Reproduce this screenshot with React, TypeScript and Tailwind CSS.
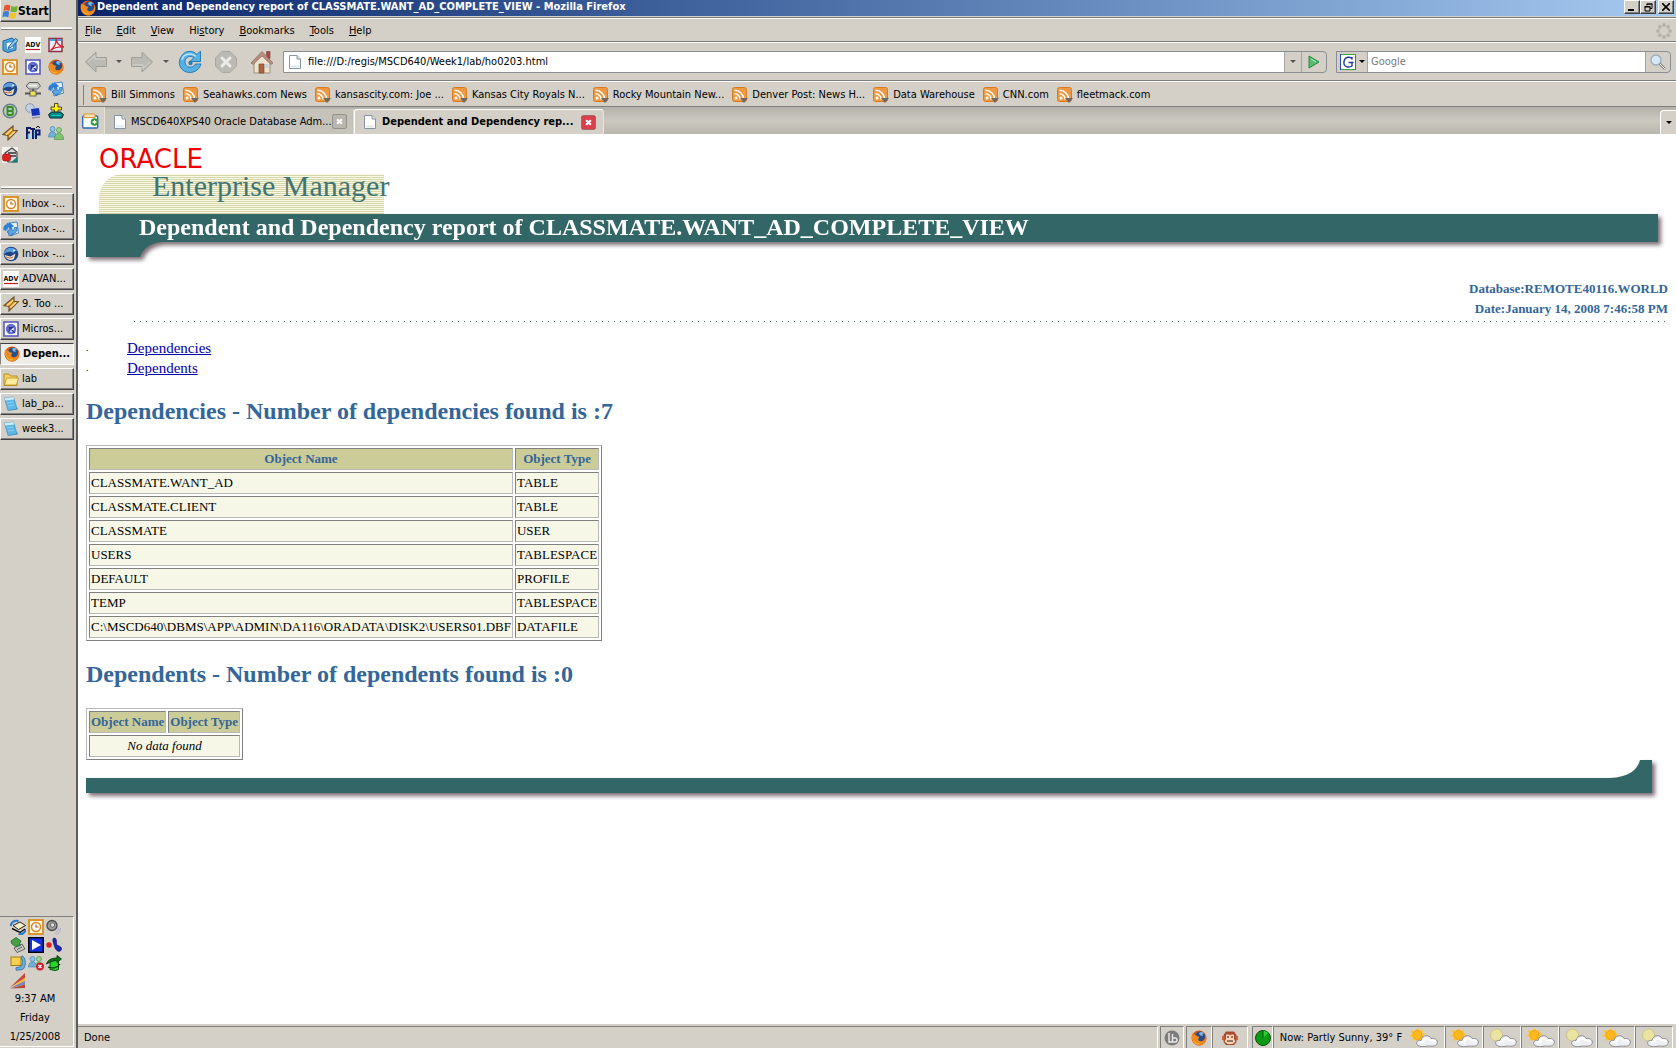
import React from "react";

type IconProps = { className?: string };
type SvgProps = { className?: string; box?: string; children: React.ReactNode };

function Svg({ className = "size-4", box = "0 0 16 16", children }: SvgProps) {
  return (
    <svg viewBox={box} className={`shrink-0 ${className}`} fill="none" aria-hidden="true">
      {children}
    </svg>
  );
}

/* ---------- launcher and tray icons ---------- */

const WindowsFlag = () => (
  <Svg>
    <path d="M2.500 2.500c2-1 4-1 6 0L7.500 8c-2-1-4-1-6 0z" fill="#e4572e" />
    <path d="M9.300 3c2 1 4 1 6.500 0L14.800 8.500c-2 1-4 1-6.500 0z" fill="#6fb43a" />
    <path d="M1.300 8.800c2-1 4-1 6 0l-1 5.500c-2-1-4-1-6 0z" fill="#3f7fd6" />
    <path d="M8 9.500c2 1 4 1 6.500 0l-1 5.500c-2 1-4 1-6.500 0z" fill="#f4c22b" />
  </Svg>
);
const ClockIcon = ({ className }: IconProps) => (
  <Svg className={className}>
    <rect x="1" y="1" width="14" height="14" fill="#fff4dc" stroke="#d9952f" strokeWidth="2" />
    <circle cx="8" cy="8" r="4.500" fill="#fff" stroke="#d68a25" strokeWidth="1.500" />
    <path d="M8 5.500V8h2.500" stroke="#a8630f" strokeWidth="1.200" />
  </Svg>
);
const ComposeIcon = () => (
  <Svg>
    <path d="M1 4l9-3 4 3v9l-8 2.500-5-2z" fill="#4da6dc" stroke="#1565a8" />
    <path d="M4 5.500l7-1 .5 7-7 1.500z" fill="#f4fbff" stroke="#1f78bd" strokeWidth=".8" />
    <path d="M6.500 10l7-8.500L16 3.500 9 10.500l-3 1z" fill="#8fd0f2" stroke="#135089" strokeWidth=".9" />
  </Svg>
);
const AdvIcon = () => (
  <Svg>
    <rect width="16" height="16" fill="#fff" />
    <text x="8" y="10" textAnchor="middle" fontSize="7" fontWeight="bold" fontFamily="DejaVu Sans Condensed, sans-serif" fill="#111">
      ADV
    </text>
    <path d="M1 12.500h14" stroke="#c01818" strokeWidth="1.200" />
  </Svg>
);
const AcrobatIcon = () => (
  <Svg>
    <rect x="1" y="1.500" width="13" height="13" fill="#e4effa" stroke="#8e3346" strokeWidth="1.500" />
    <path d="M2 3h11.500" stroke="#48a3dc" strokeWidth="2" />
    <path d="M2.500 13.500C6 10.500 8.500 6 8 2c1 5 4 7.500 8 8-5-.5-10 .5-13.500 3.500z" stroke="#d3202a" strokeWidth="1.300" fill="#fff" />
  </Svg>
);
const QueryIcon = () => (
  <Svg>
    <rect x="1" y="1" width="14" height="14" fill="#fff" stroke="#5a5cb8" strokeWidth="1.600" />
    <circle cx="8" cy="8" r="4" stroke="#5f6fcf" strokeWidth="2.400" />
    <path d="M7 7l5 5M6 6h4l-4 4z" stroke="#26309a" strokeWidth="1.200" fill="#26309a" />
  </Svg>
);
const FirefoxIcon = ({ className }: IconProps) => (
  <Svg className={className}>
    <circle cx="8" cy="8" r="7.500" fill="#d8590f" />
    <circle cx="9" cy="6.500" r="5" fill="#274f8c" />
    <path d="M8 3c2-1.500 4-1 5 .5-2 0-2 1.500-1 2.500-2 0-4-1-4-3z" fill="#7fb7e0" />
    <path d="M1 3.500c1 1 2 1 3 1l2.500 2c2 0 2 1 1 2-1 2 1 3 3 3 3 0 4.500-3 4-7C17 10 13 15.800 8 15.500 3 15 0 11 1 3.500z" fill="#ef8a1d" />
    <path d="M1.500 8c1 4 4 6 8 5.500-2 1.500-7 1-8-5.500z" fill="#f9c43a" />
  </Svg>
);
const ThunderbirdIcon = () => (
  <Svg>
    <circle cx="8" cy="8" r="7.300" fill="#1f4584" />
    <path d="M1 8c0-4 5-8 10-5.500L15 5c-2-.5-4 .5-4.500 2-3-2-6-1.500-9.500 1z" fill="#5b9ddf" />
    <path d="M1.500 9l6 1.500 5-3-1.500 5.500c-3 2-8 1-9.500-4z" fill="#f0dcc4" />
    <path d="M2 11l5 1 3-1" stroke="#b9744e" />
    <circle cx="11" cy="4.500" r=".9" fill="#fff" />
  </Svg>
);
const NetworkIcon = () => (
  <Svg>
    <path d="M1 5l3-3.500h9L15.500 5l-3 3H4z" fill="#c7c7c4" stroke="#555" strokeWidth=".9" />
    <path d="M4 4.500h8" stroke="#f5f5f2" strokeWidth="1.500" />
    <path d="M8 8v4M0 12.500h16" stroke="#555" strokeWidth="1.800" />
    <rect x="5" y="10" width="6" height="5" fill="#efe05c" stroke="#555" strokeWidth=".9" />
  </Svg>
);
const SyncMailIcon = () => (
  <Svg>
    <path d="M4 2.500l10-1.500 1.500 11L6 15z" fill="#e7f2fc" stroke="#3f83c6" />
    <path d="M.5 9C0 5 2 3 6 3V1l5 4-5 4V6.500C4 6.500 3.500 7.500 3.500 10z" fill="#2b7fd6" />
    <path d="M14 6.500c.5 4-2 6.500-5 6.500v2l-5-4 5-4v2.500c2 0 2.500-1 2.500-3z" fill="#5aa7e8" stroke="#1b57a3" strokeWidth=".6" />
  </Svg>
);
const ButtonBIcon = () => (
  <Svg>
    <circle cx="8" cy="8" r="6.800" fill="#b4cfb2" stroke="#6a7f8f" strokeWidth="1.500" />
    <path d="M5.500 12V4h3.500a2 2 0 010 4H6m3 0a2 2 0 010 4H5.500" stroke="#3a8a2c" strokeWidth="1.800" />
  </Svg>
);
const MonitorsIcon = () => (
  <Svg>
    <circle cx="5" cy="5" r="4.300" fill="#c3cfe2" stroke="#8798b4" />
    <path d="M5.500 5.500l9-1 1 8-9 1z" fill="#1830b4" stroke="#c9d2ea" />
    <path d="M7 15l8-1" stroke="#8f94a4" strokeWidth="1.500" />
  </Svg>
);
const PlusDriveIcon = () => (
  <Svg>
    <path d="M6.500.5h3.500v3.500H13.500v3H10V10H6.500V7H3V4h3.500z" fill="#ffef00" stroke="#222" strokeWidth=".8" />
    <path d="M.5 11.500l3-2.500h9l3 2.500-1.500 3.500h-12z" fill="#058585" stroke="#012f2f" />
    <path d="M3.500 12.500h9" stroke="#02d0b9" />
  </Svg>
);
const WinampIcon = () => (
  <Svg>
    <path d="M1 9.500L11 1v4.500h4.500L6 15v-4.500z" fill="#f29b1f" stroke="#6f5530" strokeWidth="1.200" />
    <path d="M4 9.500l6-5M7.500 11.500l5.500-5" stroke="#ffe296" strokeWidth="1.300" />
    <path d="M6.500 10.500l4-5" stroke="#6f5530" strokeWidth=".8" />
  </Svg>
);
const FtpIcon = () => (
  <Svg>
    <path d="M2 14V3h4M2 7.500h3M5.500 4H10M8 4v10M11 14V5.500h3.500v4H11" stroke="#0b1b6a" strokeWidth="2" />
    <path d="M3.200 14V9M9.200 13V5.500" stroke="#39b5e8" strokeWidth=".8" />
    <path d="M11 3l2-2 2 2" stroke="#111" />
  </Svg>
);
const PeopleIcon = () => (
  <Svg>
    <circle cx="4.500" cy="4" r="2.500" fill="#8cc6e8" stroke="#4a86ad" strokeWidth=".7" />
    <path d="M.5 12c0-7 8-7 8 0z" fill="#6fb1dc" stroke="#4a86ad" strokeWidth=".7" />
    <circle cx="11" cy="5" r="2.500" fill="#9bd48f" stroke="#4e9349" strokeWidth=".7" />
    <path d="M6.500 14.500c0-8.500 9-8.500 9 0z" fill="#7cc470" stroke="#4e9349" strokeWidth=".7" />
  </Svg>
);
const ServerReportIcon = () => (
  <Svg>
    <rect width="16" height="16" fill="#f4f2ee" />
    <path d="M3 6l7-5 5 4v10H6z" fill="#dcdcdc" stroke="#444" strokeWidth="1.200" />
    <path d="M6 6h8M6 9h8" stroke="#333" strokeWidth="1.400" />
    <rect x=".5" y="7" width="8" height="7" rx="2" fill="#df2020" stroke="#8d0e0e" strokeWidth=".6" />
    <path d="M9 15.500l6.500-6v6z" fill="#1e7c78" />
  </Svg>
);
const FolderIcon = () => (
  <Svg>
    <path d="M1 3h5l1.500 2H14v9.500H1z" fill="#f4d465" stroke="#b98d1f" />
    <path d="M1.500 14l2-7h12l-2 7z" fill="#ffeb9c" stroke="#b98d1f" strokeWidth=".8" />
  </Svg>
);
const NotepadIcon = () => (
  <Svg>
    <path d="M6 14.500l9-1.500-2-2-5 1z" fill="#3a5a72" />
    <path d="M1.500 2l9-1 3.500 12-9 1.500z" fill="#5db8e6" stroke="#3d8fc0" strokeWidth=".7" />
    <path d="M1.500 2l9-1 .7 2.500-9 1z" fill="#c9ecfb" />
    <path d="M4 7l6-1M5 10l6-1" stroke="#8fd2f2" />
  </Svg>
);
const TraySync = () => (
  <Svg>
    <path d="M3 6.500l7-3.500 5.500 3.500-7 4z" fill="#f4efc8" stroke="#222" />
    <path d="M1 7c-.5-4 4-6 7.500-5M15.500 10c0 4-4 6-7 5" stroke="#2676d4" strokeWidth="2" />
    <path d="M2 9.500l8 4 5-3.500" stroke="#111" strokeWidth="1.500" />
  </Svg>
);
const SpeakerIcon = () => (
  <Svg>
    <circle cx="6" cy="6.500" r="5" fill="#9c9c9c" stroke="#4b4b4b" strokeWidth="1.300" />
    <circle cx="6.500" cy="6" r="2.200" fill="#dcdcdc" stroke="#555" strokeWidth=".8" />
    <path d="M12 8.500c1 3-1 5-3 5.500M14.500 9c0 4-2 5.500-4 6.500" stroke="#a9acd0" />
  </Svg>
);
const EjectIcon = () => (
  <Svg>
    <path d="M4 11l8-4 3 5-8 3.500z" fill="#c9c9c4" stroke="#555" strokeWidth=".9" />
    <path d="M7 12.500l5-2.500" stroke="#555" />
    <path d="M1 4l5-3.500 5 3.500-1.500 3 1 1.500-5 1-4-3z" fill="#46a046" stroke="#1f5a22" strokeWidth=".7" />
  </Svg>
);
const PlayTile = () => (
  <Svg>
    <rect x=".7" y=".7" width="14.600" height="14.600" fill="#1231e0" stroke="#000" strokeWidth="1.400" />
    <path d="M4 3l9 5-9 5z" fill="#fff" />
  </Svg>
);
const JointIcon = () => (
  <Svg>
    <circle cx="3" cy="8" r="2.700" fill="#e11c1c" />
    <path d="M8 1c3 0 2.500 4 2.500 6s6 2 5 5.500c-2 4-6 1-7-3S5.500 2 8 1z" fill="#1b2bb2" stroke="#0c1160" strokeWidth=".6" />
  </Svg>
);
const DisplayIcon = () => (
  <Svg>
    <rect x="1" y="2" width="10" height="8.500" fill="#f5cf52" stroke="#a77d12" />
    <path d="M12 .7c4.500 2 4.500 12 0 14l-6 .5v-2.500l4-.7c3-2 3-7 1-9z" fill="#6aaee2" stroke="#2a69a5" strokeWidth=".8" />
  </Svg>
);
const PeopleOffline = () => (
  <Svg>
    <circle cx="4.500" cy="4" r="2.500" fill="#8cc6e8" stroke="#4a86ad" strokeWidth=".7" />
    <path d="M.5 12c0-7 8-7 8 0z" fill="#6fb1dc" stroke="#4a86ad" strokeWidth=".7" />
    <circle cx="11" cy="4" r="2.500" fill="#9bd48f" stroke="#4e9349" strokeWidth=".7" />
    <path d="M7 12c0-7 8-7 8 0z" fill="#7cc470" />
    <circle cx="12" cy="11.500" r="4" fill="#c8232b" />
    <path d="M10.500 10l3 3m0-3l-3 3" stroke="#fff" strokeWidth="1.300" />
  </Svg>
);
const GreenArrowIcon = () => (
  <Svg>
    <path d="M4 5h8.500v9.500l-3 1-5.500-1z" fill="#28d428" stroke="#064d06" />
    <path d="M.5 9C2 4 7 3 11 3V.5L15.500 4 11 7.500V5.500C7 5.500 4 7 .5 9z" fill="#0a7316" stroke="#012d05" strokeWidth=".8" />
    <path d="M2 12c5 2 9 1 12-3" stroke="#012d05" strokeWidth="1.200" />
  </Svg>
);
const FanIcon = () => (
  <Svg>
    <path d="M0 14.500L15 0v5z" fill="#d0432c" />
    <path d="M0 14.500L15 5v3z" fill="#e6b94a" />
    <path d="M0 15L15 8v3.500z" fill="#7b83b8" />
    <path d="M0 15.500L15 11.500V15z" fill="#b4483e" />
  </Svg>
);

/* ---------- browser icons ---------- */

const PageIcon = () => (
  <Svg className="h-4 w-3" box="0 0 12 16">
    <path d="M.5 1.500H8L11.500 5v9.500H.5z" fill="#fff" stroke="#8494a4" />
    <path d="M8 1.500V5h3.500" fill="#dbe6ef" stroke="#8494a4" />
    <path d="M2 12.500h8" stroke="#e1e9f0" strokeWidth="2" />
  </Svg>
);
const BackArrow = ({ className }: IconProps) => (
  <Svg className={`h-6 w-6 ${className ?? ""}`} box="0 0 24 24">
    <path d="M1.500 12L12 2v5.500h10.500v9H12V22z" fill="#bcbab4" stroke="#a09e97" />
    <path d="M4 12l7-6.500V9h10" stroke="#d6d4ce" />
  </Svg>
);
const Caret = ({ className = "text-[#555]" }: IconProps) => (
  <Svg className={`h-[3px] w-[6px] ${className}`} box="0 0 6 3">
    <path d="M0 0h6L3 3z" fill="currentColor" />
  </Svg>
);
const ReloadIcon = () => (
  <Svg className="size-6" box="0 0 24 24">
    <path d="M19 4.500L22.500 1v10.500H12l4-4C12 5 7 7 7 12c0 6 8 7 10.500 2H23C21 21 14 23.800 8.500 22 1.500 20-.5 12 3 7 6 .5 14-.5 19 4.500z" fill="#55b0e4" stroke="#2a7db8" />
    <path d="M4 10c1-6 9-8 14-3.500" stroke="#c0e6f9" strokeWidth="1.500" />
    <circle cx="12.500" cy="13" r="2.200" fill="#2a7db8" />
  </Svg>
);
const StopIcon = () => (
  <Svg className="size-6" box="0 0 24 24">
    <path d="M8 1.500h8L22.500 8v8L16 22.500H8L1.500 16V8z" fill="#bcbab5" stroke="#a9a7a2" />
    <path d="M8 8l8 8m0-8l-8 8" stroke="#ecebe8" strokeWidth="3" strokeLinecap="round" />
  </Svg>
);
const HomeIcon = () => (
  <Svg className="size-6" box="0 0 24 24">
    <path d="M16.500 1.500h3.500v7h-3.500z" fill="#a9453b" stroke="#7c554c" strokeWidth=".7" />
    <path d="M4 11l8-8 8 8v12H4z" fill="#efe2cf" stroke="#a18c79" />
    <path d="M1 13L12 1.500 23 13l-2 1.500L12 6l-9 8.500z" fill="#b98a80" stroke="#8a6a63" strokeWidth=".7" />
    <path d="M9 23v-9h5v9z" fill="#b1623f" stroke="#7b4a35" strokeWidth=".7" />
    <path d="M15.500 14h3v4h-3z" fill="#bcd3df" />
  </Svg>
);
const FeedIcon = () => (
  <Svg>
    <rect x=".5" y=".5" width="14" height="14" rx="2" fill="#ee9a44" stroke="#d97b1c" />
    <circle cx="4" cy="11" r="1.500" fill="#fff" />
    <path d="M2.500 6.800a5.700 5.700 0 015.700 5.700M2.500 3.300a9.200 9.200 0 019.200 9.200" stroke="#fff" strokeWidth="1.500" />
    <path d="M8 11h8l-4 5z" fill="#6f6a64" />
  </Svg>
);
const NewTabIcon = () => (
  <Svg className="h-4 w-[17px]" box="0 0 17 16">
    <rect x=".7" y="3" width="15" height="12" rx="1" fill="#fbfdff" stroke="#2f62b8" strokeWidth="1.300" />
    <path d="M2 1h11v3.500H2z" fill="#f5e2b4" stroke="#d79a3d" />
    <circle cx="12.500" cy="9" r="3.800" fill="#2f9b35" />
    <path d="M12.500 7v4M10.500 9h4" stroke="#fff" strokeWidth="1.300" />
  </Svg>
);
const CloseTab = ({ className }: IconProps) => (
  <Svg className={`size-[15px] ${className ?? ""}`}>
    <rect x=".5" y=".5" width="15" height="15" rx="2" fill="currentColor" stroke="#00000040" />
    <path d="M5.500 5.500l5 5m0-5l-5 5" stroke="#fff" strokeWidth="2.200" />
  </Svg>
);
const GoIcon = () => (
  <Svg className="h-[14px] w-3" box="0 0 12 14">
    <path d="M1 1l10 6-10 6z" fill="#58bb6f" stroke="#248a42" />
    <path d="M3 4l5 3" stroke="#b7e6c2" />
  </Svg>
);
const GoogleIcon = () => (
  <Svg>
    <rect x=".5" y=".5" width="15" height="15" fill="#fff" stroke="#3aa13f" />
    <path d="M.5 0v16" stroke="#2449b8" />
    <path d="M15.500 2v14" stroke="#d6302a" />
    <path d="M12 5.500V3M12 5c-1-2.500-7-3-8 2.500S9 14 12 12V8.500H8.500M12 8.500h1.500" stroke="#1c3a9e" strokeWidth="1.400" />
  </Svg>
);
const SearchIcon = () => (
  <Svg>
    <path d="M9.500 9.500L15 15" stroke="#888" strokeWidth="2.500" />
    <path d="M9.500 9.500L15 15" stroke="#e9e9e9" />
    <circle cx="6" cy="6" r="5" fill="#d6e9f5" stroke="#9aaebb" strokeWidth="1.300" />
  </Svg>
);
const throbberDots: [number, number][] = [
  [8, 2],
  [12.2, 3.8],
  [14, 8],
  [12.2, 12.2],
  [8, 14],
  [3.8, 12.2],
  [2, 8],
  [3.8, 3.8],
];
const Throbber = () => (
  <Svg>
    {throbberDots.map(([x, y]) => (
      <circle key={`${x}-${y}`} cx={x} cy={y} r="1.900" fill="#b5b2aa" />
    ))}
  </Svg>
);
const BadgeB = () => (
  <Svg>
    <circle cx="8" cy="8" r="7.500" fill="#7c7c7c" />
    <path d="M5 3v9h3M8.500 4v8h2.500a2 2 0 000-4H8.500" stroke="#e6e6e6" strokeWidth="1.500" />
  </Svg>
);
const MonkeyIcon = () => (
  <Svg>
    <path d="M4 1.500h8L14.500 5v7L12 15H4l-2.500-3V5z" fill="#a8482c" />
    <path d="M0 6h2.500v4H0zM13.500 6H16v4h-2.500z" fill="#c9623f" />
    <path d="M4 4.500h3l1 1 1-1h3v4.500l1.500 2.500-3 2.500h-5l-3-2.500L4 9z" fill="#fbd5b5" />
    <path d="M6 6v2M10 6v2M5 11h6" stroke="#3c150a" />
  </Svg>
);
const RadarIcon = () => (
  <Svg>
    <circle cx="8" cy="8" r="7.500" fill="#0c9a16" stroke="#064f0b" />
    <path d="M8 8V.8A7 7 0 0113 3z" fill="#29d238" />
    <path d="M8 8V1" stroke="#064f0b" />
  </Svg>
);
function Weather({ night = false }: { night?: boolean }) {
  return (
    <Svg className="h-[19px] w-[29px]" box="0 0 29 19">
      {!night && (
        <path
          d="M9 0l1.500 3L14 1.500l-.5 3.500L17 6l-3 2 2 3.500-3.500-.5L9 15l-2-3.500-4 1.500 1-4L0 8l3-2.500L1.500 2l4 1z"
          fill="#f7c53a"
        />
      )}
      <circle cx="8.500" cy="7" r={night ? 6 : 4.5} fill={night ? "#ebe3a0" : "#fdb81e"} stroke={night ? "#cbc58a" : "#f2a51c"} />
      <path d="M9 17.500c-3-2-1-6 3-5 1-6 9-6 10-2 5-1 8 3 5.500 6-2 2.500-7 1.500-9 1.500-3 1-7.500 1-9.500-.5z" fill="#eeeff3" stroke="#84868e" strokeWidth=".9" />
      <path d="M10.500 14.500c2-1 3-1 4-.5 0-4 5-5 7-1.500 2-.5 4 0 5 1.500" stroke="#fff" strokeWidth="1.800" />
    </Svg>
  );
}

/* ---------- desktop sidebar ---------- */

const raised = "border border-t-white border-l-white border-r-[#404040] border-b-[#404040] shadow-[inset_-1px_-1px_0_#808080]";

const launchers: [string, React.ReactNode][] = [
  ["Compose", <ComposeIcon />],
  ["ADV", <AdvIcon />],
  ["Acrobat", <AcrobatIcon />],
  ["Outlook", <ClockIcon />],
  ["Query", <QueryIcon />],
  ["Firefox", <FirefoxIcon />],
  ["Thunderbird", <ThunderbirdIcon />],
  ["Network", <NetworkIcon />],
  ["Sync mail", <SyncMailIcon />],
  ["Notes", <ButtonBIcon />],
  ["Remote desktop", <MonitorsIcon />],
  ["Drive", <PlusDriveIcon />],
  ["Winamp", <WinampIcon />],
  ["FTP", <FtpIcon />],
  ["Messenger", <PeopleIcon />],
  ["Server", <ServerReportIcon />],
];

const tasks: [string, React.ReactNode][] = [
  ["Inbox -...", <ClockIcon />],
  ["Inbox -...", <SyncMailIcon />],
  ["Inbox -...", <ThunderbirdIcon />],
  ["ADVAN...", <AdvIcon />],
  ["9. Too ...", <WinampIcon />],
  ["Micros...", <QueryIcon />],
  ["Depen...", <FirefoxIcon />],
  ["lab", <FolderIcon />],
  ["lab_pa...", <NotepadIcon />],
  ["week3...", <NotepadIcon />],
];

function Divider() {
  return <div className="ml-px mr-1 h-[3px] border-b border-t border-b-[#808080] border-t-[#f4f3ef] bg-white" />;
}

function Sidebar() {
  return (
    <aside className="flex w-[78px] shrink-0 flex-col border-r-2 border-[#5c5c5c] bg-[#d4d0c8]">
      <button className={`flex h-[22px] w-[51px] items-center border-t-0 pl-px text-[12px] font-bold ${raised}`}>
        <WindowsFlag />
        Start
      </button>
      <div className="mt-[5px]">
        <Divider />
      </div>
      <nav className="mt-[7px] grid grid-cols-[repeat(3,16px)] gap-x-[7px] gap-y-[6px] pl-[2px]" aria-label="Quick launch">
        {launchers.map(([name, icon]) => (
          <button key={name} aria-label={name} className="size-4">
            {icon}
          </button>
        ))}
      </nav>
      <div className="mt-[23px]">
        <Divider />
      </div>
      <nav className="mt-1 flex flex-col gap-[3px] pr-[2px]" aria-label="Tasks">
        {tasks.map(([name, icon], i) => (
          <button
            key={i}
            className={
              name === "Depen..."
                ? "flex h-[22px] items-center gap-[3px] whitespace-nowrap border border-b-white border-l-[#808080] border-r-white border-t-[#404040] bg-[#efedea] pl-[3px] font-bold"
                : `flex h-[22px] items-center gap-[3px] whitespace-nowrap pl-[2px] ${raised}`
            }
          >
            {icon}
            {name}
          </button>
        ))}
      </nav>
      <div className="mb-px mr-[2px] mt-auto border border-l-0 border-b-white border-r-white border-t-[#808080] pt-[2px]">
        <div className="grid grid-cols-[repeat(3,16px)] gap-[2px] pl-[10px]">
          <TraySync />
          <ClockIcon />
          <SpeakerIcon />
          <EjectIcon />
          <PlayTile />
          <JointIcon />
          <DisplayIcon />
          <PeopleOffline />
          <GreenArrowIcon />
          <FanIcon />
        </div>
        <div className="pr-[3px] text-center leading-[19px]">
          <p>9:37 AM</p>
          <p>Friday</p>
          <p>1/25/2008</p>
        </div>
      </div>
    </aside>
  );
}

/* ---------- browser window ---------- */

const capButton = `flex h-[14px] w-4 items-center justify-center bg-[#d4d0c8] ${raised}`;

function TitleBar() {
  return (
    <header className="flex h-4 items-center bg-linear-to-r from-[#0a246a] to-[#a6caf0] pr-[2px] text-white">
      <FirefoxIcon className="ml-[2px] size-4" />
      <h1 className="ml-px flex-1 pb-[2px] text-[11px] font-bold">
        Dependent and Dependency report of CLASSMATE.WANT_AD_COMPLETE_VIEW - Mozilla Firefox
      </h1>
      <div className="flex self-start text-black">
        <button aria-label="Minimize" className={capButton}>
          <Svg className="h-2 w-2" box="0 0 8 8">
            <path d="M0 7h6" stroke="#000" strokeWidth="2" />
          </Svg>
        </button>
        <button aria-label="Restore" className={capButton}>
          <Svg className="h-[9px] w-[9px]" box="0 0 9 9">
            <path d="M3 2.500V1h5v4.500H6M1 3.500h5V8H1z" stroke="#000" />
            <path d="M2.500 1h6M.5 4h6" stroke="#000" />
          </Svg>
        </button>
        <button aria-label="Close" className={`ml-[2px] ${capButton}`}>
          <Svg className="h-2 w-2" box="0 0 8 8">
            <path d="M0 0l8 8m0-8L0 8" stroke="#000" strokeWidth="1.600" />
          </Svg>
        </button>
      </div>
    </header>
  );
}

const menus: [string, string, string][] = [
  ["", "F", "ile"],
  ["", "E", "dit"],
  ["", "V", "iew"],
  ["Hi", "s", "tory"],
  ["", "B", "ookmarks"],
  ["", "T", "ools"],
  ["", "H", "elp"],
];

function MenuBar() {
  return (
    <div className="mt-px flex h-[25px] items-center border-b border-t border-[#808080] pl-[7px] pr-[4px] pt-[2px] shadow-[inset_0_1px_0_#fff]">
      <nav className="flex flex-1 gap-[15px]">
        {menus.map(([a, k, b]) => (
          <button key={k + b}>
            {a}
            <u>{k}</u>
            {b}
          </button>
        ))}
      </nav>
      <Throbber />
    </div>
  );
}

function NavBar() {
  return (
    <div className="flex h-[39px] items-center border-b border-t border-b-[#808080] border-t-white pl-[6px] pr-[5px]">
      <button aria-label="Back">
        <BackArrow />
      </button>
      <button aria-label="Back history" className="ml-[8px]">
        <Caret />
      </button>
      <button aria-label="Forward" className="ml-[8px]">
        <BackArrow className="rotate-180" />
      </button>
      <button aria-label="Forward history" className="ml-[9px]">
        <Caret />
      </button>
      <button aria-label="Reload" className="ml-[9px]">
        <ReloadIcon />
      </button>
      <button aria-label="Stop" className="ml-[12px]">
        <StopIcon />
      </button>
      <button aria-label="Home" className="ml-[12px]">
        <HomeIcon />
      </button>
      <div className="ml-[9px] flex h-[22px] flex-1 items-stretch overflow-hidden rounded-r-[4px] border border-[#8a8f94]">
        <label className="flex flex-1 items-center gap-[7px] bg-white pl-[5px]">
          <PageIcon />
          <input
            aria-label="Address"
            className="w-full flex-1 bg-transparent outline-none"
            defaultValue="file:///D:/regis/MSCD640/Week1/lab/ho0203.html"
          />
        </label>
        <button aria-label="Show history" className="flex w-[17px] items-center justify-center border-l border-[#a5a5a0]">
          <Caret />
        </button>
        <button aria-label="Go" className="flex w-[25px] items-center justify-center border-l border-[#a5a5a0]">
          <GoIcon />
        </button>
      </div>
      <div className="ml-[9px] flex h-[22px] w-[335px] items-stretch overflow-hidden rounded-r-[4px] border border-[#8a8f94]">
        <button aria-label="Search engine" className="flex w-[30px] items-center justify-center gap-[3px]">
          <GoogleIcon />
          <Caret className="text-black" />
        </button>
        <input
          aria-label="Search"
          placeholder="Google"
          className="min-w-0 flex-1 border-l border-r border-[#a5a5a0] bg-white pl-[3px] outline-none placeholder:text-[#7a7a7a]"
        />
        <button aria-label="Search" className="flex w-6 items-center justify-center">
          <SearchIcon />
        </button>
      </div>
    </div>
  );
}

const bookmarks = [
  "Bill Simmons",
  "Seahawks.com News",
  "kansascity.com: Joe ...",
  "Kansas City Royals N...",
  "Rocky Mountain New...",
  "Denver Post: News H...",
  "Data Warehouse",
  "CNN.com",
  "fleetmack.com",
];

function BookmarksBar() {
  return (
    <div className="flex h-[26px] items-center border-b border-t border-b-[#808080] border-t-white pl-[5px] pt-[2px]">
      <div className="mr-[7px] h-5 w-px bg-[#808080]" />
      <nav className="flex gap-[8px]" aria-label="Bookmarks">
        {bookmarks.map((b) => (
          <button key={b} className="flex items-center gap-1 whitespace-nowrap">
            <FeedIcon />
            {b}
          </button>
        ))}
      </nav>
    </div>
  );
}

function TabBar() {
  return (
    <div className="flex h-[27px] items-end bg-linear-to-b from-[#b4b1aa] via-[#cbc8c0] to-[#b9b6ae]">
      <button aria-label="New tab" className="flex h-full w-[27px] items-center border-r border-[#e6e3dc] bg-[#d4d0c8] pl-[4px]">
        <NewTabIcon />
      </button>
      <div className="flex h-[25px] w-[249px] items-center border-r border-[#dedbd4] bg-[#c6c3bb] pl-[9px] pr-[6px]">
        <PageIcon />
        <button className="ml-[5px] flex-1 whitespace-nowrap text-left">MSCD640XPS40 Oracle Database Adm...</button>
        <button aria-label="Close tab">
          <CloseTab className="text-[#b9b6af]" />
        </button>
      </div>
      <div className="flex h-[25px] w-[250px] items-center rounded-t-[3px] border border-b-0 border-white border-r-[#e6e3dc] bg-[#d4d0c8] pl-[9px] pr-[7px]">
        <PageIcon />
        <button className="ml-[6px] flex-1 whitespace-nowrap text-left font-bold">Dependent and Dependency rep...</button>
        <button aria-label="Close tab">
          <CloseTab className="text-[#d9404c]" />
        </button>
      </div>
      <button aria-label="List all tabs" className="ml-auto flex h-6 w-4 items-center justify-center rounded-tl border-l border-t border-white bg-[#d4d0c8]">
        <Caret className="text-black" />
      </button>
    </div>
  );
}

/* ---------- report ---------- */

const cell = "h-[22px] border border-b-[#b8b8b8] border-l-[#808080] border-r-[#b8b8b8] border-t-[#808080] px-px leading-[20px]";
const headCell = `${cell} bg-[#cccc99] font-bold text-[#336699]`;
const bodyCell = `${cell} bg-[#f7f7e7]`;
const tableFrame =
  "border-separate border-spacing-[2px] whitespace-nowrap border border-b-[#808080] border-l-[#b8b8b8] border-r-[#808080] border-t-[#b8b8b8] text-[13px]";

const dependencies: [string, string][] = [
  ["CLASSMATE.WANT_AD", "TABLE"],
  ["CLASSMATE.CLIENT", "TABLE"],
  ["CLASSMATE", "USER"],
  ["USERS", "TABLESPACE"],
  ["DEFAULT", "PROFILE"],
  ["TEMP", "TABLESPACE"],
  ["C:\\MSCD640\\DBMS\\APP\\ADMIN\\DA116\\ORADATA\\DISK2\\USERS01.DBF", "DATAFILE"],
];

function Report() {
  return (
    <main className="flex-1 bg-white px-2 font-['Liberation_Serif',serif] text-black">
      <div className="flex h-20 flex-col pl-[13px] pt-[16px]">
        <div className="h-6 font-['DejaVu_Sans',sans-serif] text-[26px] leading-[18px] text-[#f00000]">ORACLE</div>
        <div className="h-10 w-[285px] whitespace-nowrap rounded-tl-[24px] bg-[repeating-linear-gradient(0deg,#d6d6a8_0_1px,#f8f8e6_1px_2px)] pl-[53px] text-[30px] leading-[24px] text-[#417474]">
          Enterprise Manager
        </div>
      </div>
      <div className="mr-[10px] drop-shadow-[3px_3px_2px_rgba(80,60,70,0.75)]">
        <h2 className="h-7 bg-[#336666] pl-[53px] text-[24px] font-bold leading-[27px] text-white">
          Dependent and Dependency report of CLASSMATE.WANT_AD_COMPLETE_VIEW
        </h2>
        <svg viewBox="0 0 76 15" className="h-[15px] w-[76px]" aria-hidden="true">
          <path d="M0 0H76C65 1 57 6 54 15H0z" fill="#336666" />
        </svg>
      </div>
      <div className="mt-[22px] text-right text-[13px] font-bold leading-5 text-[#336699]">
        <p>Database:REMOTE40116.WORLD</p>
        <p>Date:January 14, 2008 7:46:58 PM</p>
      </div>
      <div className="ml-12 mt-[2px] h-px bg-[repeating-linear-gradient(90deg,#446677_0_1px,transparent_1px_6px)]" />
      <ul className="mt-[16px] text-[15px] leading-5 text-[#0000aa]">
        {["Dependencies", "Dependents"].map((name) => (
          <li key={name} className="flex">
            <span className="w-[41px] text-[10px] text-black">.</span>
            <a href={`#${name}`} className="underline">
              {name}
            </a>
          </li>
        ))}
      </ul>
      <h2 id="Dependencies" className="mt-[19px] text-[24px] font-bold leading-7 text-[#336699]">
        Dependencies - Number of dependencies found is :7
      </h2>
      <table className={`mt-[20px] ${tableFrame}`}>
        <thead>
          <tr>
            <th className={headCell}>Object Name</th>
            <th className={headCell}>Object Type</th>
          </tr>
        </thead>
        <tbody>
          {dependencies.map(([name, type]) => (
            <tr key={name}>
              <td className={bodyCell}>{name}</td>
              <td className={bodyCell}>{type}</td>
            </tr>
          ))}
        </tbody>
      </table>
      <h2 id="Dependents" className="mt-[19px] text-[24px] font-bold leading-7 text-[#336699]">
        Dependents - Number of dependents found is :0
      </h2>
      <table className={`mt-[20px] ${tableFrame}`}>
        <thead>
          <tr>
            <th className={headCell}>Object Name</th>
            <th className={headCell}>Object Type</th>
          </tr>
        </thead>
        <tbody>
          <tr>
            <td colSpan={2} className={`${bodyCell} text-center italic`}>
              No data found
            </td>
          </tr>
        </tbody>
      </table>
      <div className="mr-4 flex flex-col items-end drop-shadow-[3px_3px_2px_rgba(80,60,70,0.75)]">
        <svg viewBox="0 0 42 18" className="h-[18px] w-[42px]" aria-hidden="true">
          <path d="M42 0H30C27 11 18 17 0 18H42z" fill="#336666" />
        </svg>
        <div className="h-[15px] w-full bg-[#336666]" />
      </div>
    </main>
  );
}

const panel = "flex items-center justify-center border-l border-t border-[#808080] border-r border-r-white";

function StatusBar() {
  return (
    <footer className="flex h-6 items-stretch gap-[2px] border-t-2 border-[#d4d0c8] bg-[#d4d0c8] pr-[3px]">
      <div className="flex flex-1 items-center border-r border-t border-r-white border-t-[#808080] pl-[6px]">Done</div>
      <div className={`w-6 ${panel}`}>
        <BadgeB />
      </div>
      <div className="flex">
        <div className={`w-[26px] ${panel}`}>
          <FirefoxIcon />
        </div>
        <div className={`w-9 ${panel}`}>
          <MonkeyIcon />
        </div>
      </div>
      <div className="ml-[2px] flex">
        <div className={`w-[21px] ${panel}`}>
          <RadarIcon />
        </div>
        <div className={`w-[172px] gap-[7px] whitespace-nowrap ${panel}`}>
          Now: Partly Sunny, 39° F
          <Weather />
        </div>
        {[false, true, false, true, false, true].map((night, i) => (
          <div key={i} className={`w-[38px] ${panel}`}>
            <Weather night={night} />
          </div>
        ))}
      </div>
    </footer>
  );
}

export default function App() {
  return (
    <div className="flex min-h-screen bg-[#d4d0c8] font-['DejaVu_Sans_Condensed','DejaVu_Sans',sans-serif] text-[11px] leading-4 text-black">
      <Sidebar />
      <div className="flex min-w-0 flex-1 flex-col">
        <TitleBar />
        <MenuBar />
        <NavBar />
        <BookmarksBar />
        <TabBar />
        <Report />
        <StatusBar />
      </div>
    </div>
  );
}
